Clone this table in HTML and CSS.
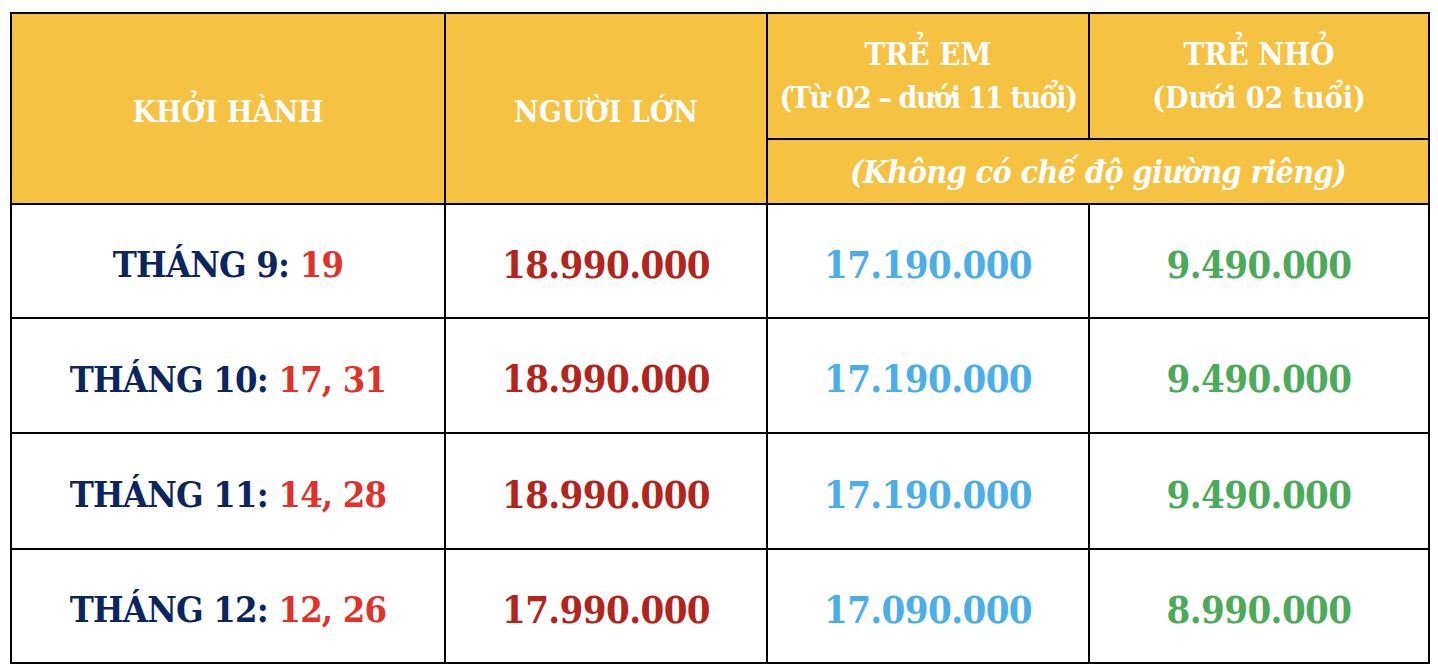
FILE: index.html
```html
<!DOCTYPE html>
<html lang="vi">
<head>
<meta charset="utf-8">
<title>Bảng giá tour</title>
<link rel="stylesheet" href="styles.css">
</head>
<body>
<table class="price-table">
  <colgroup>
    <col class="c1"><col class="c2"><col class="c3"><col class="c4">
  </colgroup>
  <thead>
    <tr class="h1">
      <th rowspan="2" class="hd main">KHỞI HÀNH</th>
      <th rowspan="2" class="hd main">NGƯỜI LỚN</th>
      <th class="hd"><span class="t1">TRẺ EM</span><span class="t2 tight">(Từ 02 – dưới 11 tuổi)</span></th>
      <th class="hd"><span class="t1">TRẺ NHỎ</span><span class="t2">(Dưới 02 tuổi)</span></th>
    </tr>
    <tr class="h2">
      <th colspan="2" class="hd note">(Không có chế độ giường riêng)</th>
    </tr>
  </thead>
  <tbody>
    <tr class="r1">
      <td class="date">THÁNG 9: <span class="days">19</span></td>
      <td class="price adult">18.990.000</td>
      <td class="price child">17.190.000</td>
      <td class="price infant">9.490.000</td>
    </tr>
    <tr class="r2">
      <td class="date">THÁNG 10: <span class="days">17, 31</span></td>
      <td class="price adult">18.990.000</td>
      <td class="price child">17.190.000</td>
      <td class="price infant">9.490.000</td>
    </tr>
    <tr class="r3">
      <td class="date">THÁNG 11: <span class="days">14, 28</span></td>
      <td class="price adult">18.990.000</td>
      <td class="price child">17.190.000</td>
      <td class="price infant">9.490.000</td>
    </tr>
    <tr class="r4">
      <td class="date">THÁNG 12: <span class="days">12, 26</span></td>
      <td class="price adult">17.990.000</td>
      <td class="price child">17.090.000</td>
      <td class="price infant">8.990.000</td>
    </tr>
  </tbody>
</table>
</body>
</html>
```

FILE: styles.css
```css
html, body {
  margin: 0;
  padding: 0;
  background: #ffffff;
}

.price-table {
  margin: 12px 0 0 10px;
  border-collapse: separate;
  border-spacing: 0;
  table-layout: fixed;
  width: 1420px;
  border-top: 2px solid #000;
  border-left: 2px solid #000;
  font-family: "DejaVu Serif", "Liberation Serif", serif;
}

.c1 { width: 434px; }
.c2 { width: 322px; }
.c3 { width: 322px; }
.c4 { width: 340px; }

.price-table th,
.price-table td {
  box-sizing: border-box;
  padding: 0;
  border-right: 2px solid #000;
  border-bottom: 2px solid #000;
  text-align: center;
  vertical-align: middle;
  white-space: nowrap;
  overflow: hidden;
}

.price-table td { padding-top: 6px; }
.price-table th.main { padding-top: 5px; }

.h1 { height: 126px; }
.h2 { height: 65px; }
.r1 { height: 114px; }
.r2 { height: 115px; }
.r3 { height: 116px; }
.r4 { height: 114px; }

.hd {
  background: #f5c242;
  color: #ffffff;
  font-weight: bold;
  font-size: 30px;
  font-stretch: condensed;
}

.t1, .t2 {
  display: block;
  font-stretch: condensed;
  line-height: 44px;
}

.t1 { font-size: 31px; }
.t2 { font-size: 30px; }
.tight { letter-spacing: -1.4px; }

.note {
  font-style: italic;
  font-size: 32px;
  letter-spacing: -0.6px;
}

.date {
  color: #0b255f;
  font-weight: bold;
  font-size: 36px;
  letter-spacing: -0.8px;
  font-stretch: condensed;
}

.days { color: #e0312a; }

.price {
  font-weight: bold;
  font-size: 38px;
  letter-spacing: -0.6px;
  font-stretch: condensed;
}

.adult { color: #b3241c; }
.child { color: #4caee8; }
.infant { color: #4caa5b; }
```
